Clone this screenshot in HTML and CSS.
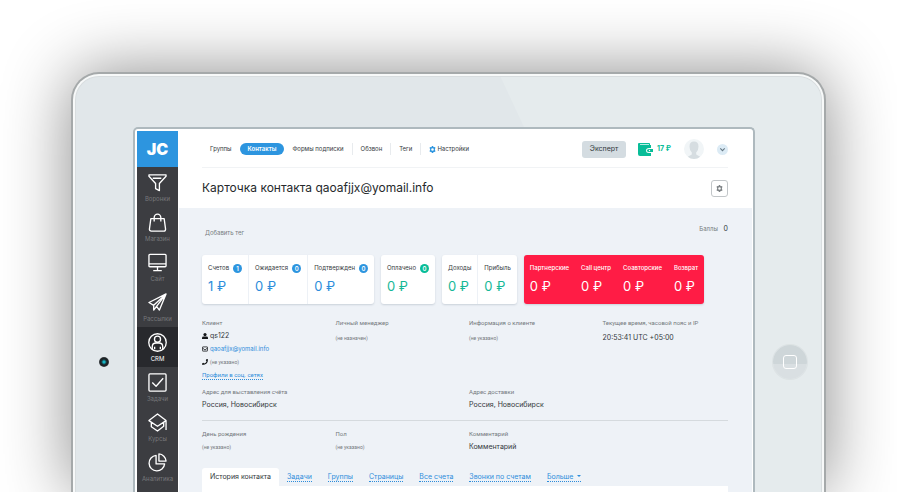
FILE: index.html
```html
<!DOCTYPE html>
<html lang="ru">
<head>
<meta charset="utf-8">
<meta name="viewport" content="width=device-width, initial-scale=1">
<title>Карточка контакта</title>
<link rel="stylesheet" href="styles.css">
</head>
<body>
<div class="tablet">
  <div class="bezel">
    <div class="bezel-side"><span class="camera"></span></div>
    <div class="screen">
      <aside class="sidebar">
        <a class="logo" href="#">JC</a>
        <a class="side-item" href="#">
          <svg viewBox="0 0 20 20"><path d="M1 2h18v1.500l-7 7.500v7.500l-4-2V11L1 3.500zM5 5.500h9"/></svg>
          Воронки</a>
        <a class="side-item" href="#">
          <svg viewBox="0 0 20 20"><path d="M3 6h14l1.500 11q0 2-2 2h-13q-2 0-2-2zM6.500 9V5a3.500 3.800 0 0 1 7 0v4"/></svg>
          Магазин</a>
        <a class="side-item" href="#">
          <svg viewBox="0 0 20 20"><path d="M2 1.500h16q1 0 1 1v11q0 1-1 1H2q-1 0-1-1v-11q0-1 1-1zM1 11.500h18M10 14.500v4M5.500 18.500h9"/></svg>
          Сайт</a>
        <a class="side-item" href="#">
          <svg viewBox="0 0 20 20"><path d="M19 1 1 10l5 3zM19 1l-7 17-3-4zM19 1 6 13v5l3-4"/></svg>
          Рассылки</a>
        <a class="side-item active" href="#">
          <svg viewBox="0 0 20 20"><circle cx="10" cy="10" r="9.200"/><circle cx="10" cy="6.500" r="3.200"/><path d="M4.500 17v-2.500q0-4 4-4h3q4 0 4 4V17M7 17v-2.500M13 17v-2.500"/></svg>
          CRM</a>
        <a class="side-item" href="#">
          <svg viewBox="0 0 20 20"><rect x="1" y="1" width="18" height="18" rx="1"/><path d="m4.500 10 4 4 7.500-8.500"/></svg>
          Задачи</a>
        <a class="side-item" href="#">
          <svg viewBox="0 0 20 20"><path d="m10 1 9 7-9 6-9-6zM3.500 10v4.500l6.500 4.500 6.500-5V10M19 8v10"/></svg>
          Курсы</a>
        <a class="side-item" href="#">
          <svg viewBox="0 0 20 20"><path d="M8.500 2.500a8.200 8.200 0 1 0 9 9h-9zM11.500 1a8 8 0 0 1 7.500 7.500h-7.500z"/></svg>
          Аналитика</a>
      </aside>
      <main class="main">
        <header class="top">
          <div class="topbar">
            <nav class="nav">
              <a href="#">Группы</a>
              <a class="current" href="#">Контакты</a>
              <a href="#">Формы подписки</a>
              <a class="split" href="#">Обзвон</a>
              <a class="split" href="#">Теги</a>
              <a class="split" href="#"><svg class="gear" viewBox="0 0 16 16"><path fill-rule="evenodd" d="M6.500 0h3l.5 2 1.500.8 2-.6 1.500 2.600L13.500 6.300v3.400l1.500 1.500-1.500 2.600-2-.6-1.500.8-.5 2h-3L6 14l-1.500-.8-2 .6L1 11.200l1.500-1.500V6.300L1 4.800l1.500-2.600 2 .6L6 2zM8 5a3 3 0 1 0 0 6 3 3 0 0 0 0-6z"/></svg>Настройки</a>
            </nav>
            <div class="account">
              <button class="plan" type="button">Эксперт</button>
              <a class="wallet" href="#"><svg viewBox="0 0 15 13"><path d="M1 0h10q1 0 1 1v1h1v3h-2q-3 0-3 2.500T11 10h2v3H2q-2 0-2-2V1q0-1 1-1z"/><path class="lid" d="M2 1.500h9"/><path d="M11 6h4v3h-4q-2 0-2-1.500T11 6z"/><circle class="clasp" cx="11.500" cy="7.500" r=".7"/></svg>17 ₽</a>
              <svg class="avatar" viewBox="0 0 20 20"><circle class="disc" cx="10" cy="10" r="10"/><path d="M10 2.500q4.500 0 4.500 5 0 4-2.300 6v2l4 2.300Q13.500 20 10 20t-6.200-2.200l4-2.300v-2q-2.300-2-2.300-6 0-5 4.500-5z"/></svg>
              <button class="more" type="button" aria-label="Меню"><svg viewBox="0 0 10 10"><path d="m3 4 2 2 2-2"/></svg></button>
            </div>
          </div>
          <div class="heading">
            <h1>Карточка контакта qaoafjjx@yomail.info</h1>
            <button class="tool" type="button" aria-label="Настройки"><svg class="gear" viewBox="0 0 16 16"><path fill-rule="evenodd" d="M6.500 0h3l.5 2 1.500.8 2-.6 1.500 2.600L13.500 6.300v3.400l1.500 1.500-1.500 2.600-2-.6-1.500.8-.5 2h-3L6 14l-1.500-.8-2 .6L1 11.200l1.500-1.500V6.300L1 4.800l1.500-2.600 2 .6L6 2zM8 5a3 3 0 1 0 0 6 3 3 0 0 0 0-6z"/></svg></button>
          </div>
        </header>
        <div class="content">
          <div class="tags">
            <a href="#">Добавить тег</a>
            <div class="points">Баллы <b>0</b></div>
          </div>
          <section class="stats">
            <div class="card blue">
              <div class="stat"><p>Счетов <i>1</i></p><strong>1 ₽</strong></div>
              <div class="stat"><p>Ожидается <i>0</i></p><strong>0 ₽</strong></div>
              <div class="stat"><p>Подтвержден <i>0</i></p><strong>0 ₽</strong></div>
            </div>
            <div class="card green">
              <div class="stat"><p>Оплачено <i>0</i></p><strong>0 ₽</strong></div>
            </div>
            <div class="card green">
              <div class="stat"><p>Доходы</p><strong>0 ₽</strong></div>
              <div class="stat"><p>Прибыль</p><strong>0 ₽</strong></div>
            </div>
            <div class="card red">
              <div class="stat"><p>Партнерские</p><strong>0 ₽</strong></div>
              <div class="stat"><p>Call центр</p><strong>0 ₽</strong></div>
              <div class="stat"><p>Соавторские</p><strong>0 ₽</strong></div>
              <div class="stat"><p>Возврат</p><strong>0 ₽</strong></div>
            </div>
          </section>
          <section class="fields">
            <div>
              <h2>Клиент</h2>
              <ul class="client">
                <li><svg viewBox="0 0 12 12"><circle cx="6" cy="3.200" r="3.200"/><path d="M0 12V9.500Q0 7 3 7h6q3 0 3 2.500V12z"/></svg>qs122</li>
                <li><svg class="line" viewBox="0 0 12 12"><rect x=".8" y="1.800" width="10.400" height="8.400" rx="1"/><path d="m1 4 5 4 5-4"/></svg><a class="mail" href="#">qaoafjjx@yomail.info</a></li>
                <li><svg viewBox="0 0 12 12"><path d="m9 0 3 .7Q12 12 .7 12L0 9l3-1.400 1.400 1.600Q8 7.500 9.200 4.400L7.600 3z"/></svg><small>(не указано)</small></li>
                <li><a class="dotted" href="#">Профили в соц. сетях</a></li>
              </ul>
            </div>
            <div><h2>Личный менеджер</h2><p class="low"><small>(не назначен)</small></p></div>
            <div><h2>Информация о клиенте</h2><p class="low"><small>(не указано)</small></p></div>
            <div><h2>Текущее время, часовой пояс и IP</h2><p class="low">20:53:41 UTC +05:00</p></div>
            <div class="wide"><h2>Адрес для выставления счёта</h2><p>Россия, Новосибирск</p></div>
            <div class="wide"><h2>Адрес доставки</h2><p>Россия, Новосибирск</p></div>
          </section>
          <section class="fields ruled">
            <div><h2>День рождения</h2><p><small>(не указано)</small></p></div>
            <div><h2>Пол</h2><p><small>(не указано)</small></p></div>
            <div class="wide"><h2>Комментарий</h2><p>Комментарий</p></div>
          </section>
          <nav class="tabs">
            <a class="current" href="#">История контакта</a>
            <a href="#"><span>Задачи</span></a>
            <a href="#"><span>Группы</span></a>
            <a href="#"><span>Страницы</span></a>
            <a href="#"><span>Все счета</span></a>
            <a href="#"><span>Звонки по счетам</span></a>
            <a href="#"><span class="drop">Больше</span></a>
          </nav>
          <div class="panel"></div>
        </div>
      </main>
    </div>
    <div class="bezel-side"><button class="home" type="button" aria-label="Домой"></button></div>
  </div>
</div>
</body>
</html>
```
FILE: styles.css
```css
* { box-sizing: border-box; }
html, body { height: 100%; }
body { margin: 0; padding: 72px 71px 0; overflow: hidden; background: #fff; font: 7px/12px Inter, "Liberation Sans", sans-serif; color: #33383c; }
a { color: inherit; text-decoration: none; }
h1, h2, p, ul { margin: 0; padding: 0; font-weight: 400; }
button { padding: 0; border: 0; font: inherit; color: inherit; }
svg { display: block; fill: currentColor; flex: none; }

.tablet { display: flex; height: 100%; border: 2px solid #a5a9aa; border-bottom: 0; border-radius: 28px 28px 0 0; background: #f7f9f9; padding: 2px 2px 0; box-shadow: 0 0 68px rgba(0, 0, 0, .46); }
.bezel { position: relative; flex: 1; min-width: 0; display: grid; grid-template-columns: 57px minmax(0, 1fr) 66px; padding-top: 50px; border-radius: 24px 24px 0 0; border: 1px solid #d8dddf; border-bottom: 0; background: #e1e7ea; overflow: hidden; }
.bezel::before { content: ""; position: absolute; inset: 0; background: #e5ebed; clip-path: polygon(57% 0, 100% 0, 100% 100%, 83% 100%); }
.bezel-side { position: relative; display: flex; justify-content: center; align-items: flex-start; padding-top: 218px; }
.camera { width: 10px; height: 10px; margin: 12px 2px 0 0; border-radius: 50%; background: radial-gradient(circle, #17b6c4 0 1px, #14555e 2px, #1d2225 3px 4px, #41484b 5px); }
.home { width: 34px; height: 34px; margin-left: 3px; border-radius: 50%; display: grid; place-items: center; background: linear-gradient(#ced6d9 55%, #d9dfe2 55%); box-shadow: 0 0 0 1px #dce2e4; }
.home::before { content: ""; width: 12px; height: 12px; border: 1px solid #fff; border-radius: 3px; }

.screen { position: relative; display: flex; border: 2px solid #aeb9be; border-bottom: 0; border-radius: 5px 5px 0 0; padding: 2px 1px 0 2px; background: #fff; overflow: hidden; }
.sidebar { flex: none; width: 41px; margin-right: 1px; background: #3c3d41; }
.logo { display: flex; align-items: center; justify-content: center; height: 36px; background: #2d95df; color: #fff; font-size: 16px; font-weight: 900; }
.side-item { display: flex; flex-direction: column; align-items: center; height: 40px; padding-top: 6px; font-size: 6px; line-height: 14px; color: #77787b; }
.side-item svg { width: 19px; height: 19px; fill: none; stroke: #fff; stroke-width: 1.400; stroke-linejoin: round; }
.side-item.active { background: #28292d; color: #fff; }

.main { flex: 1; min-width: 0; display: flex; flex-direction: column; }
.top { padding: 0 24px 0 23px; }
.topbar { display: flex; justify-content: space-between; align-items: center; height: 37px; border-bottom: 1px solid #f1f3f5; }
.nav { display: flex; align-items: center; font-size: 6px; }
.nav a { display: flex; align-items: center; padding: 0 8px; }
.nav .current { background: #2d95df; color: #fff; border-radius: 6px; font-weight: 600; }
.nav .split { border-left: 1px solid #e8ebee; }
.gear { width: 7px; height: 7px; }
.nav .gear { margin-right: 1px; color: #2d95df; }
.account { display: flex; align-items: center; }
.plan { width: 44px; height: 17px; border-radius: 3px; background: #d4dce1; }
.wallet { display: flex; align-items: center; gap: 4px; margin: 0 13px 0 12px; color: #08bd98; font-weight: 700; }
.wallet svg { width: 15px; height: 13px; }
.wallet .lid { stroke: #b9eee2; }
.wallet .clasp { fill: #fff; }
.avatar { width: 20px; height: 20px; color: #d6dde1; }
.avatar .disc { fill: #f1f5f7; }
.more { width: 11px; height: 11px; margin-left: 13px; border-radius: 50%; background: #dcebf5; }
.more path { fill: none; stroke: #667985; }
.heading { display: flex; align-items: center; justify-content: space-between; height: 40px; }
h1 { font-size: 12px; line-height: 16px; color: #25292c; }
.tool { width: 17px; height: 17px; display: grid; place-items: center; border: 1px solid #c2c6c9; border-radius: 3px; background: #fff; color: #7d8285; }

.content { flex: 1; padding: 15px 24px 0 23px; background: #eef2f7; }
.tags { display: flex; justify-content: space-between; height: 32px; padding-left: 3px; font-size: 6px; color: #777c80; }
.tags a { padding-top: 4px; }
.points b { margin-left: 4px; font-size: 7px; font-weight: 400; color: #33383c; }
.stats { display: flex; gap: 7px; }
.card { display: flex; height: 49px; border-radius: 3px; background: #fff; box-shadow: 0 1px 2px rgba(60, 80, 100, .2); }
.stat { padding: 7px 6px 0; }
.stat + .stat { border-left: 1px solid #edf1f6; }
.stat p { display: flex; align-items: center; gap: 4px; font-size: 6px; white-space: nowrap; }
.stat i { width: 9px; height: 9px; border-radius: 50%; background: #2d95df; color: #fff; font-size: 6px; line-height: 9px; font-style: normal; font-weight: 600; text-align: center; }
.stat strong { display: block; margin-top: 3px; font-size: 13px; line-height: 18px; font-weight: 400; color: #2d8ddb; white-space: nowrap; }
.green i { background: #08bd98; }
.green strong { color: #16b897; }
.red { background: #ff1c45; color: #fff; }
.red p { font-weight: 500; }
.red strong { color: #fff; }
.red .stat + .stat { border: 0; }

.fields { display: grid; grid-template-columns: repeat(4, minmax(0, 1fr)); gap: 3px 8px; margin-top: 13px; }
.fields .wide { grid-column: span 2; }
h2 { font: 6px/12px Roboto, sans-serif; color: #74797d; white-space: nowrap; }
.fields p { margin-top: 1px; }
.fields .low { margin-top: 3px; }
small { font: 5px/12px Roboto, sans-serif; color: #74797d; }
.client { list-style: none; }
.client li { display: flex; align-items: center; height: 13px; }
.client li:last-child { height: 15px; }
.client svg { width: 6px; height: 6px; margin-right: 2px; color: #15181a; }
.client .line { fill: none; stroke: currentColor; stroke-width: 1.600; }
.client a { color: #2d8ddb; }
.client .mail { font-size: 6px; }
.client .dotted { font: 6px/8px Roboto, sans-serif; border-bottom: 1px dotted #2d8ddb; }
.ruled { margin-top: 9px; padding-top: 7px; border-top: 1px solid #d5dade; }
.tabs { display: flex; margin-top: 15px; line-height: 18px; }
.tabs a { padding: 0 8px; color: #2d8ddb; white-space: nowrap; }
.tabs span { display: inline-block; line-height: 9px; border-bottom: 1px dotted #2d8ddb; }
.tabs .current { background: #fff; color: #33383c; border-radius: 3px 3px 0 0; }
.drop::after { content: ""; display: inline-block; margin-left: 4px; border: 2px solid transparent; border-top-color: #2d8ddb; border-bottom: 0; vertical-align: 2px; }
.panel { height: 60px; background: #fff; }
```
